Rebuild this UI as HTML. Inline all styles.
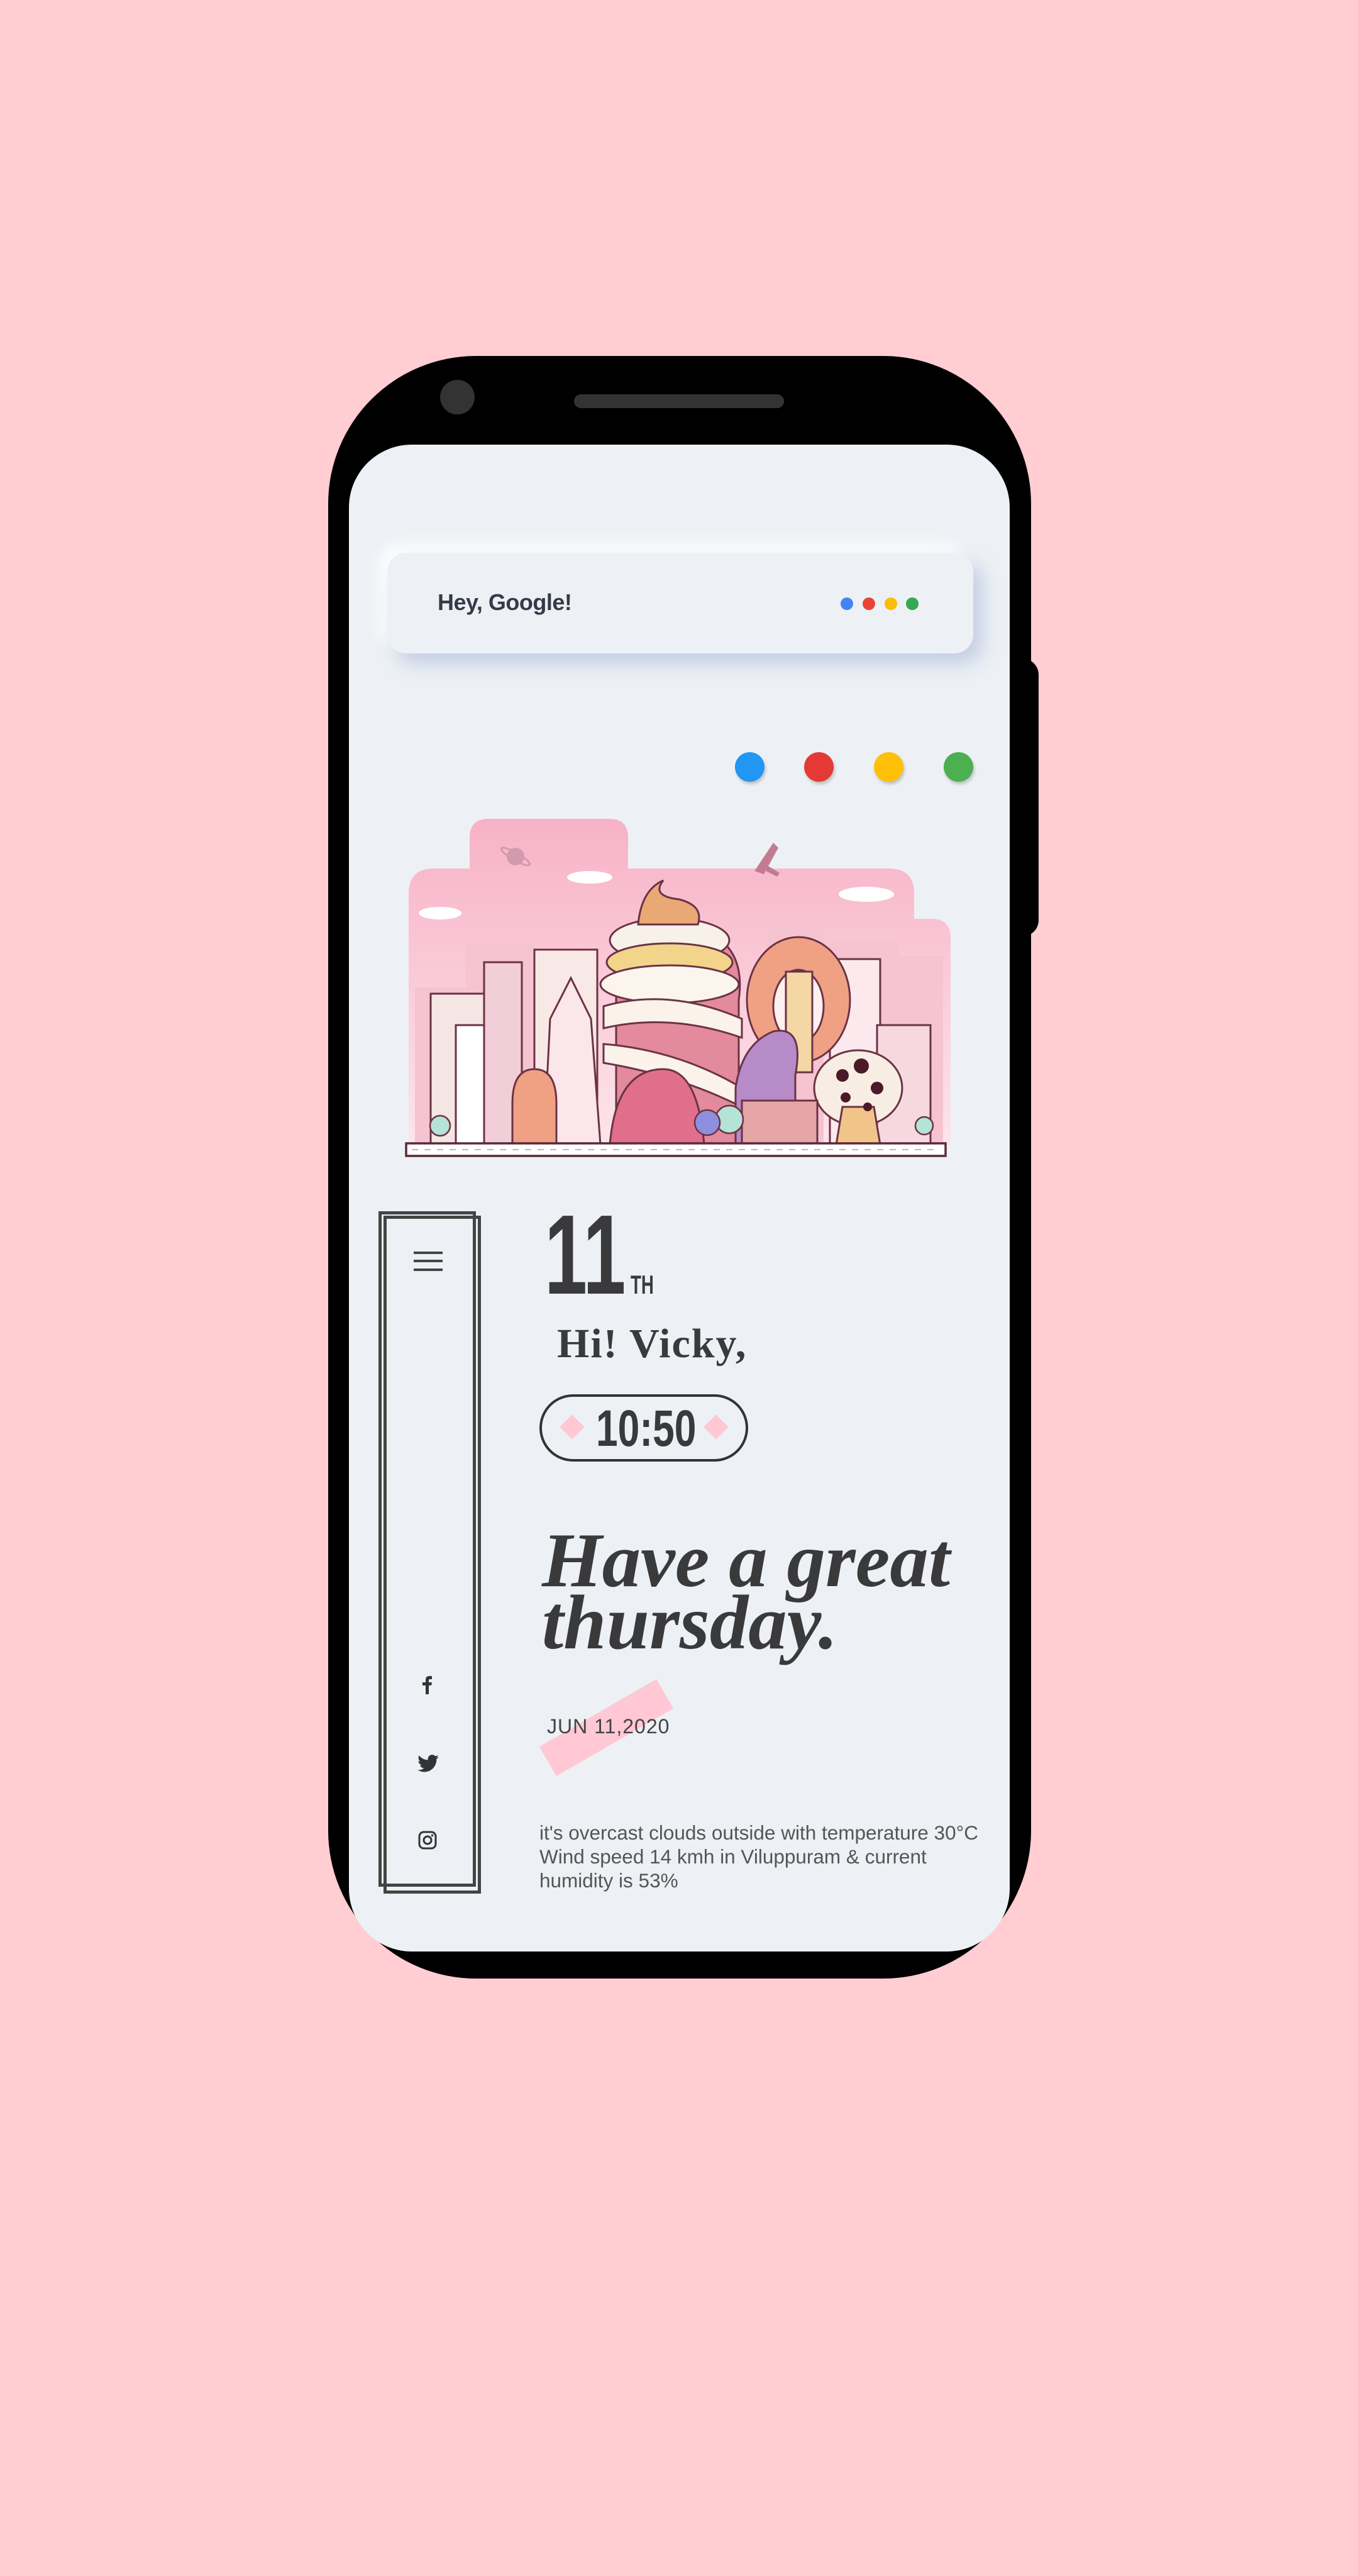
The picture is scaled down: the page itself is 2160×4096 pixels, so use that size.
<!DOCTYPE html>
<html><head><meta charset="utf-8"><style>
*{margin:0;padding:0;box-sizing:border-box}
body{width:2160px;height:4096px;background:#ffcdd2;position:relative;overflow:hidden;font-family:"Liberation Sans",sans-serif}
.a{position:absolute}
.body{left:522px;top:566px;width:1118px;height:2580px;background:#000;border-radius:235px}
.btn{left:1600px;top:1047px;width:52px;height:442px;background:#000;border-radius:0 26px 26px 0}
.screen{left:555px;top:707px;width:1051px;height:2396px;background:#edf1f5;border-radius:100px}
.cam{left:700px;top:604px;width:55px;height:55px;border-radius:50%;background:#333}
.spk{left:913px;top:627px;width:334px;height:22px;border-radius:11px;background:#333}
.card{left:616px;top:879px;width:932px;height:160px;border-radius:30px;background:#edf1f5;box-shadow:14px 16px 30px rgba(180,192,222,.75),-12px -12px 26px #ffffff}
.dot{border-radius:50%}
.txt{white-space:nowrap;line-height:1;color:#3a3a3c}
.side{border:5px solid #444}
.hb{left:658px;width:46px;height:4px;background:#444}
</style></head><body>
<div class="a btn"></div>
<div class="a body"></div>
<div class="a cam"></div>
<div class="a spk"></div>
<div class="a screen"></div>

<div class="a card"></div>
<div class="a txt" style="left:696px;top:940px;font-size:36px;font-weight:bold;color:#363a48;letter-spacing:-0.5px">Hey, Google!</div>
<div class="a dot" style="left:1337px;top:950px;width:20px;height:20px;background:#4285f4"></div>
<div class="a dot" style="left:1372px;top:950px;width:20px;height:20px;background:#ea4335"></div>
<div class="a dot" style="left:1407px;top:950px;width:20px;height:20px;background:#fbbc05"></div>
<div class="a dot" style="left:1441px;top:950px;width:20px;height:20px;background:#34a853"></div>

<div class="a dot" style="left:1169px;top:1196px;width:47px;height:47px;background:#2196f3;box-shadow:2px 4px 5px rgba(0,0,0,.2)"></div>
<div class="a dot" style="left:1279px;top:1196px;width:47px;height:47px;background:#e53935;box-shadow:2px 4px 5px rgba(0,0,0,.2)"></div>
<div class="a dot" style="left:1390px;top:1196px;width:47px;height:47px;background:#ffc107;box-shadow:2px 4px 5px rgba(0,0,0,.2)"></div>
<div class="a dot" style="left:1501px;top:1196px;width:47px;height:47px;background:#4caf50;box-shadow:2px 4px 5px rgba(0,0,0,.2)"></div>

<svg class="a" style="left:640px;top:1290px" width="880" height="560" viewBox="0 0 880 560">
<defs><linearGradient id="sk" x1="0" y1="0" x2="0" y2="1"><stop offset="0" stop-color="#f7b2c6"/><stop offset="1" stop-color="#fde4eb"/></linearGradient></defs>
<path d="M137 12 H329 Q359 12 359 42 V91 H774 Q814 91 814 131 V171 H842 Q872 171 872 201 V530 H10 V131 Q10 91 50 91 H107 V42 Q107 12 137 12Z" fill="url(#sk)"/>
<g fill="#fff"><ellipse cx="60" cy="162" rx="34" ry="10"/><ellipse cx="298" cy="105" rx="36" ry="10"/><ellipse cx="738" cy="132" rx="44" ry="12"/></g>
<circle cx="180" cy="72" r="14" fill="#d39aad"/><ellipse cx="180" cy="72" rx="26" ry="6" fill="none" stroke="#d39aad" stroke-width="3" transform="rotate(30 180 72)"/>
<path d="M560 95 L590 50 L598 58 L575 100Z M570 80 L600 98 L596 104 L565 88Z" fill="#c27c92"/>
<g fill="#f6c3d1"><rect x="100" y="210" width="110" height="320"/><rect x="580" y="185" width="90" height="345"/><rect x="680" y="205" width="110" height="325"/><rect x="790" y="230" width="70" height="300"/><rect x="20" y="280" width="80" height="250"/></g>
<g stroke="#6b3346" stroke-width="3">
<rect x="45" y="290" width="85" height="240" fill="#f5e6e3"/>
<rect x="85" y="340" width="60" height="190" fill="#fff"/>
<rect x="130" y="240" width="60" height="290" fill="#f2cfd8"/>
<rect x="210" y="220" width="100" height="310" fill="#f9e9e6"/>
<rect x="680" y="235" width="80" height="295" fill="#fbe9ee"/>
<rect x="755" y="340" width="85" height="190" fill="#f6d9e0"/>
<path d="M235 330 L268 265 L300 330 L315 530 L225 530Z" fill="#fbe6ea"/>
<path d="M340 530 V270 Q330 210 380 200 L500 200 Q545 230 535 300 V530Z" fill="#e38a9c"/>
<ellipse cx="425" cy="205" rx="95" ry="35" fill="#f8f1ea"/>
<ellipse cx="425" cy="240" rx="100" ry="30" fill="#f2d48a"/>
<ellipse cx="425" cy="275" rx="110" ry="30" fill="#fbf5ee"/>
<path d="M320 310 Q425 280 540 330 L540 360 Q425 320 320 345Z" fill="#fbf2ea"/>
<path d="M320 370 Q440 380 540 440 L540 470 Q440 420 320 400Z" fill="#fbf2ea"/>
<path d="M375 180 Q380 125 415 110 Q395 135 440 140 Q480 150 470 180Z" fill="#eaa874"/>
<ellipse cx="630" cy="300" rx="82" ry="100" fill="#f0a184"/>
<ellipse cx="630" cy="310" rx="40" ry="58" fill="#fdf0ee"/>
<rect x="610" y="255" width="42" height="160" fill="#f5d7a6"/>
<path d="M530 440 Q540 370 590 350 Q640 340 625 420 L625 530 L530 530Z" fill="#b78ac8"/>
<path d="M330 530 Q340 410 415 410 Q470 410 480 530Z" fill="#e16f8c"/>
<ellipse cx="725" cy="440" rx="70" ry="60" fill="#f8ede2"/>
<path d="M700 470 H750 L760 530 H690Z" fill="#f1c58a"/>
<path d="M175 530 V465 Q175 410 210 410 Q245 410 245 465 V530Z" fill="#f0a184"/>
<rect x="540" y="460" width="120" height="70" fill="#e6a6a8"/>
</g>
<g fill="#4a1a2a"><circle cx="700" cy="420" r="10"/><circle cx="730" cy="405" r="12"/><circle cx="755" cy="440" r="10"/><circle cx="705" cy="455" r="8"/><circle cx="740" cy="470" r="7"/></g>
<g fill="#b5e3d8" stroke="#6b3346" stroke-width="2.5"><circle cx="520" cy="490" r="22"/><circle cx="60" cy="500" r="16"/><circle cx="830" cy="500" r="14"/></g>
<circle cx="485" cy="495" r="20" fill="#8f8fe0" stroke="#6b3346" stroke-width="2.5"/>
<rect x="6" y="528" width="858" height="20" fill="#fff" stroke="#5a2a3a" stroke-width="3.5"/>
<line x1="15" y1="538" x2="855" y2="538" stroke="#c9b4bb" stroke-width="2" stroke-dasharray="10 10"/>
</svg>

<div class="a side" style="left:602px;top:1926px;width:155px;height:1074px"></div>
<div class="a side" style="left:610px;top:1933px;width:155px;height:1078px"></div>
<div class="a hb" style="top:1990px"></div>
<div class="a hb" style="top:2003px"></div>
<div class="a hb" style="top:2017px"></div>
<svg class="a" style="left:668px;top:2664px" width="24" height="30" viewBox="0 0 24 30"><path d="M9 30 V16 H4 V11 H9 V7 Q9 1 15 1 H19 V6 H16 Q14 6 14 8 V11 H19 L18 16 H14 V30Z" fill="#333"/></svg>
<svg class="a" style="left:664px;top:2790px" width="34" height="28" viewBox="0 0 24 20"><path d="M24 2.4a10 10 0 0 1-2.8.8 5 5 0 0 0 2.1-2.7 10 10 0 0 1-3.1 1.2A4.9 4.9 0 0 0 11.8 6.1 14 14 0 0 1 1.7 1 4.9 4.9 0 0 0 3.2 7.6 4.9 4.9 0 0 1 1 7v.1a4.9 4.9 0 0 0 3.9 4.8 4.9 4.9 0 0 1-2.2.1 4.9 4.9 0 0 0 4.6 3.4A9.9 9.9 0 0 1 0 17.4 14 14 0 0 0 7.5 19.6c9.1 0 14-7.5 14-14v-.6A10 10 0 0 0 24 2.4z" fill="#333"/></svg>
<svg class="a" style="left:665px;top:2911px" width="30" height="30" viewBox="0 0 30 30"><rect x="2" y="2" width="26" height="26" rx="7" fill="none" stroke="#333" stroke-width="3"/><circle cx="15" cy="15" r="6" fill="none" stroke="#333" stroke-width="3"/><circle cx="22.5" cy="7.5" r="1.8" fill="#333"/></svg>

<div class="a txt" style="left:866px;top:1906px;font-size:180px;font-weight:bold;transform:scaleX(.68);transform-origin:left">11</div>
<div class="a txt" style="left:1003px;top:2022px;font-size:42px;font-weight:bold;transform:scaleX(.66);transform-origin:left">TH</div>
<div class="a txt" style="left:886px;top:2104px;font-family:'Liberation Serif',serif;font-size:66px;font-weight:bold;letter-spacing:2px">Hi! Vicky,</div>
<div class="a" style="left:858px;top:2217px;width:332px;height:107px;border:4px solid #333;border-radius:54px"></div>
<div class="a" style="left:896px;top:2255px;width:28px;height:28px;background:#ffc8d4;transform:rotate(45deg)"></div>
<div class="a" style="left:1125px;top:2255px;width:28px;height:28px;background:#ffc8d4;transform:rotate(45deg)"></div>
<div class="a txt" style="left:948px;top:2231px;font-size:82px;font-weight:bold;transform:scaleX(.76);transform-origin:left">10:50</div>
<div class="a txt" style="left:862px;top:2419px;font-family:'Liberation Serif',serif;font-size:123px;font-weight:bold;font-style:italic">Have a great</div>
<div class="a txt" style="left:862px;top:2518px;font-family:'Liberation Serif',serif;font-size:123px;font-weight:bold;font-style:italic">thursday.</div>
<div class="a" style="left:857px;top:2720px;width:215px;height:54px;background:#ffc8d4;transform:rotate(-30deg)"></div>
<div class="a txt" style="left:870px;top:2729px;font-size:32px;color:#444;letter-spacing:1px">JUN 11,2020</div>
<div class="a" style="left:858px;top:2895px;font-size:31.5px;line-height:38px;color:#555;white-space:nowrap">it's overcast clouds outside with temperature 30°C<br>Wind speed 14 kmh in Viluppuram &amp; current<br>humidity is 53%</div>
</body></html>
